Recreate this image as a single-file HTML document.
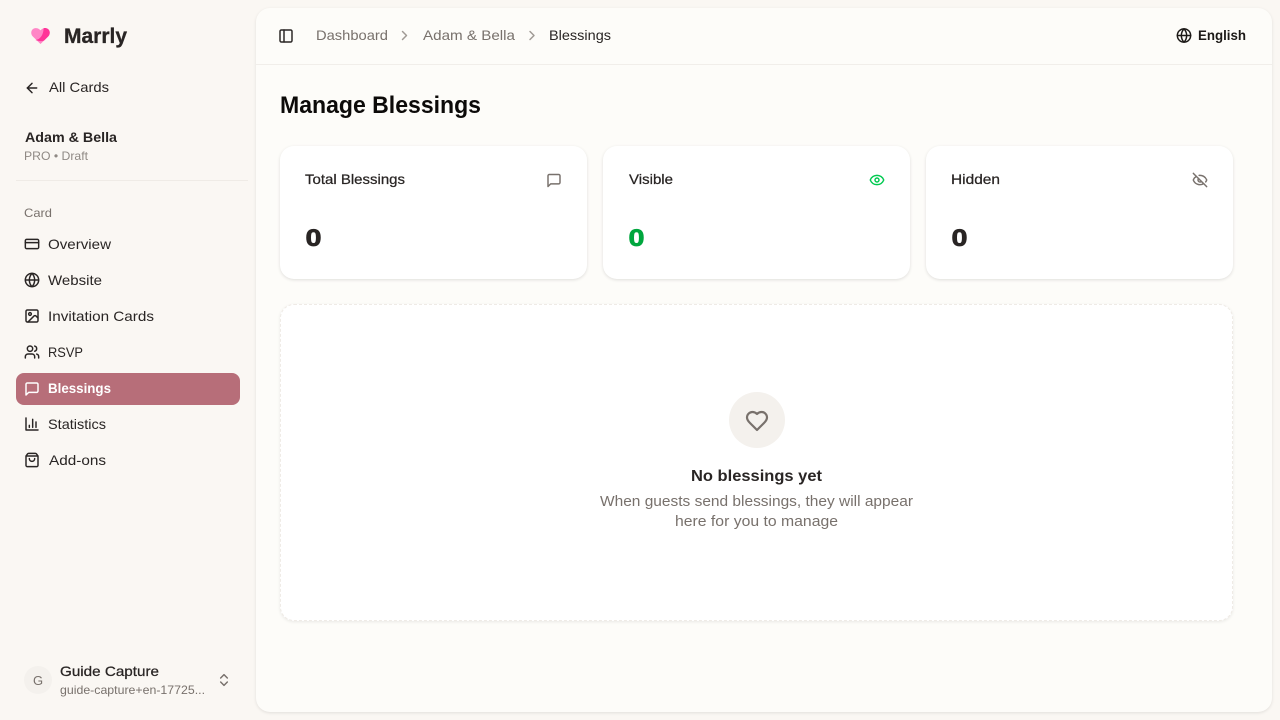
<!DOCTYPE html>
<html lang="en"><head><meta charset="utf-8"><title>Manage Blessings</title>
<style>
html,body{margin:0;padding:0;width:1280px;height:720px;overflow:hidden;background:#faf7f3}
body{position:relative;font-family:"Liberation Sans",sans-serif}
.b{position:absolute;box-sizing:border-box}
#main{left:256px;top:8px;width:1016px;height:704px;background:#fdfcf9;border-radius:14px;box-shadow:0 1px 3px rgba(0,0,0,.1)}
#hd{left:256px;top:64px;width:1016px;height:1px;background:#f1eeea}
#sep{left:16px;top:180px;width:232px;height:1px;background:#efebe6}
#act{left:16px;top:373px;width:224px;height:32px;background:#b76e79;border-radius:8px}
.card{background:#fff;border-radius:14px;top:146px;width:307px;height:133px;box-shadow:0 1px 3px rgba(0,0,0,.12)}
#big{left:280px;top:304px;width:953px;height:317px;background:#fff;border-radius:14px;border:1px dashed #efebe6;box-shadow:0 1px 3px rgba(0,0,0,.08)}
#hc{left:729px;top:392px;width:56px;height:56px;border-radius:50%;background:#f4f1ed}
#av{left:24px;top:666px;width:28px;height:28px;border-radius:50%;background:#f4f1ed}
svg{position:absolute;left:0;top:0}
text{font-family:"Liberation Sans",sans-serif}
.i{fill:none;stroke-width:2.2;stroke-linecap:round;stroke-linejoin:round}
.m{stroke:#292524;stroke-width:.25px}
.z{stroke-width:.7px}
</style></head><body>
<div class="b" id="main"></div><div class="b" id="hd"></div><div class="b" id="sep"></div><div class="b" id="act"></div>
<div class="b card" style="left:280px"></div><div class="b card" style="left:603px"></div><div class="b card" style="left:926px"></div>
<div class="b" id="big"></div><div class="b" id="hc"></div><div class="b" id="av"></div>
<svg width="1280" height="720" viewBox="0 0 1280 720" xmlns="http://www.w3.org/2000/svg">
<defs>
<symbol id="msg" viewBox="0 0 24 24"><path d="M21 15a2 2 0 0 1-2 2H7l-4 4V5a2 2 0 0 1 2-2h14a2 2 0 0 1 2 2z"/></symbol>
<symbol id="globe" viewBox="0 0 24 24"><circle cx="12" cy="12" r="10"/><path d="M12 2a14.5 14.5 0 0 0 0 20 14.5 14.5 0 0 0 0-20"/><path d="M2 12h20"/></symbol>
<symbol id="chev" viewBox="0 0 24 24"><path d="m9 18 6-6-6-6"/></symbol>
</defs>

<!-- logo -->
<path d="M40.5 44 L32.6 36.2 C30.2 33.6 31 29 34.6 28.2 C37 27.7 39.2 28.6 40.5 30.4 C41.8 28.6 44 27.7 46.4 28.2 C50 29 50.8 33.6 48.4 36.2 Z" fill="#ff86c6"/>
<path d="M35.5 40 C40 39.5 43.5 35 43.6 28.2 C44.5 27.9 45.6 28 46.4 28.2 C50 29 50.8 33.6 48.4 36.2 L44 40.6 C41.5 41.4 38.5 41.2 35.5 40Z" fill="#ff3498"/>
<text x="64" y="43" font-size="21" font-weight="700" fill="#292524" stroke="#292524" stroke-width=".3" textLength="63" lengthAdjust="spacingAndGlyphs">Marrly</text>

<!-- back -->
<g class="i" stroke="#292524" transform="translate(24 80) scale(.6667)"><path d="m12 19-7-7 7-7"/><path d="M19 12H5"/></g>
<text x="49" y="92" font-size="14" fill="#292524" textLength="60" lengthAdjust="spacingAndGlyphs">All Cards</text>

<text x="25" y="142" font-size="14" font-weight="700" fill="#292524" textLength="92" lengthAdjust="spacingAndGlyphs">Adam &amp; Bella</text>
<text x="24" y="160" font-size="12" fill="#8f8984" textLength="64" lengthAdjust="spacingAndGlyphs">PRO • Draft</text>
<text x="24" y="217" font-size="12" fill="#78716c" textLength="28" lengthAdjust="spacingAndGlyphs">Card</text>

<!-- nav icons -->
<g class="i" stroke="#292524">
<g transform="translate(24 236) scale(.6667)"><rect width="20" height="14" x="2" y="5" rx="2"/><line x1="2" x2="22" y1="10" y2="10"/></g>
<use href="#globe" x="24" y="272" width="16" height="16"/>
<g transform="translate(24 308) scale(.6667)"><rect width="18" height="18" x="3" y="3" rx="2"/><circle cx="9" cy="9" r="2"/><path d="m21 15-3.086-3.086a2 2 0 0 0-2.828 0L6 21"/></g>
<g transform="translate(24 344) scale(.6667)"><path d="M16 21v-2a4 4 0 0 0-4-4H6a4 4 0 0 0-4 4v2"/><circle cx="9" cy="7" r="4"/><path d="M22 21v-2a4 4 0 0 0-3-3.87"/><path d="M16 3.13a4 4 0 0 1 0 7.75"/></g>
<g transform="translate(24 416) scale(.6667)"><path d="M3 3v18h18"/><path d="M18 17V9"/><path d="M13 17V5"/><path d="M8 17v-3"/></g>
<g transform="translate(24 452) scale(.6667)"><path d="M16 10a4 4 0 0 1-8 0"/><path d="M3.103 6.034h17.794"/><path d="M3.4 5.467a2 2 0 0 0-.4 1.2V20a2 2 0 0 0 2 2h14a2 2 0 0 0 2-2V6.667a2 2 0 0 0-.4-1.2l-2-2.667A2 2 0 0 0 17 2H7a2 2 0 0 0-1.6.8z"/></g>
</g>
<use href="#msg" class="i" stroke="#fff" x="24" y="381" width="16" height="16"/>

<g font-size="14" fill="#292524">
<text x="48" y="249" textLength="63" lengthAdjust="spacingAndGlyphs">Overview</text>
<text x="48" y="285" textLength="54" lengthAdjust="spacingAndGlyphs">Website</text>
<text x="48" y="321" textLength="106" lengthAdjust="spacingAndGlyphs">Invitation Cards</text>
<text x="48" y="357" textLength="35" lengthAdjust="spacingAndGlyphs">RSVP</text>
<text x="48" y="393" font-weight="700" fill="#fff" textLength="63" lengthAdjust="spacingAndGlyphs">Blessings</text>
<text x="48" y="429" textLength="58" lengthAdjust="spacingAndGlyphs">Statistics</text>
<text x="49" y="465" textLength="57" lengthAdjust="spacingAndGlyphs">Add-ons</text>
</g>

<!-- user -->
<text x="38" y="685" font-size="13" fill="#78716c" text-anchor="middle">G</text>
<text class="m" x="60" y="676" font-size="14" fill="#292524" textLength="99" lengthAdjust="spacingAndGlyphs">Guide Capture</text>
<text x="60" y="694" font-size="12" fill="#78716c" textLength="145" lengthAdjust="spacingAndGlyphs">guide-capture+en-17725...</text>
<g class="i" stroke="#78716c" transform="translate(216 672) scale(.6667)"><path d="m7 15 5 5 5-5"/><path d="m7 9 5-5 5 5"/></g>

<!-- header -->
<g class="i" stroke="#292524" transform="translate(278 28) scale(.6667)"><rect width="18" height="18" x="3" y="3" rx="2"/><path d="M9 3v18"/></g>
<text x="316" y="40" font-size="14" fill="#78716c" textLength="72" lengthAdjust="spacingAndGlyphs">Dashboard</text>
<use href="#chev" class="i" stroke="#a09a95" x="396.5" y="27.5" width="16" height="16"/>
<text x="423" y="40" font-size="14" fill="#78716c" textLength="92" lengthAdjust="spacingAndGlyphs">Adam &amp; Bella</text>
<use href="#chev" class="i" stroke="#a09a95" x="524" y="27.5" width="16" height="16"/>
<text x="549" y="40" font-size="14" fill="#292524" textLength="62" lengthAdjust="spacingAndGlyphs">Blessings</text>
<use href="#globe" class="i" stroke="#1c1917" x="1176" y="27.5" width="16" height="16"/>
<text x="1198" y="40" font-size="14" font-weight="700" fill="#1c1917" textLength="48" lengthAdjust="spacingAndGlyphs">English</text>

<text x="280" y="113" font-size="24" font-weight="700" fill="#0c0a09" textLength="201" lengthAdjust="spacingAndGlyphs">Manage Blessings</text>

<!-- stats -->
<g font-size="14" fill="#292524">
<text class="m" x="305" y="184" textLength="100" lengthAdjust="spacingAndGlyphs">Total Blessings</text>
<text class="m" x="629" y="184" textLength="44" lengthAdjust="spacingAndGlyphs">Visible</text>
<text class="m" x="951" y="184" textLength="49" lengthAdjust="spacingAndGlyphs">Hidden</text>
</g>
<use href="#msg" class="i" stroke="#78716c" x="546" y="172.5" width="16" height="16"/>
<g class="i" stroke="#00c950" transform="translate(869 172) scale(.6667)"><path d="M2.062 12.348a1 1 0 0 1 0-.696 10.75 10.75 0 0 1 19.876 0 1 1 0 0 1 0 .696 10.75 10.75 0 0 1-19.876 0"/><circle cx="12" cy="12" r="3"/></g>
<g class="i" stroke="#78716c" transform="translate(1192 172) scale(.6667)"><path d="M10.733 5.076a10.744 10.744 0 0 1 11.205 6.575 1 1 0 0 1 0 .696 10.747 10.747 0 0 1-1.444 2.49"/><path d="M14.084 14.158a3 3 0 0 1-4.242-4.242"/><path d="M17.479 17.499a10.75 10.75 0 0 1-15.417-5.151 1 1 0 0 1 0-.696 10.75 10.75 0 0 1 4.446-5.143"/><path d="m2 2 20 20"/></g>
<g font-size="24" font-weight="700">
<text class="z" x="305.5" y="246" fill="#292524" stroke="#292524" textLength="16" lengthAdjust="spacingAndGlyphs">0</text>
<text class="z" x="628.5" y="246" fill="#00a63e" stroke="#00a63e" textLength="16" lengthAdjust="spacingAndGlyphs">0</text>
<text class="z" x="951.5" y="246" fill="#292524" stroke="#292524" textLength="16" lengthAdjust="spacingAndGlyphs">0</text>
</g>

<!-- empty -->
<path class="i" stroke="#78716c" transform="translate(745 409)" d="M19 14c1.49-1.46 3-3.21 3-5.5A5.5 5.5 0 0 0 16.5 3c-1.76 0-3 .5-4.5 2-1.5-1.5-2.74-2-4.5-2A5.5 5.5 0 0 0 2 8.5c0 2.3 1.5 4.05 3 5.5l7 7Z"/>
<text x="691" y="481" font-size="16" font-weight="700" fill="#292524" textLength="131" lengthAdjust="spacingAndGlyphs">No blessings yet</text>
<text x="600" y="506" font-size="14.5" fill="#78716c" textLength="313" lengthAdjust="spacingAndGlyphs">When guests send blessings, they will appear</text>
<text x="675" y="526" font-size="14.5" fill="#78716c" textLength="163" lengthAdjust="spacingAndGlyphs">here for you to manage</text>
</svg>
</body></html>
